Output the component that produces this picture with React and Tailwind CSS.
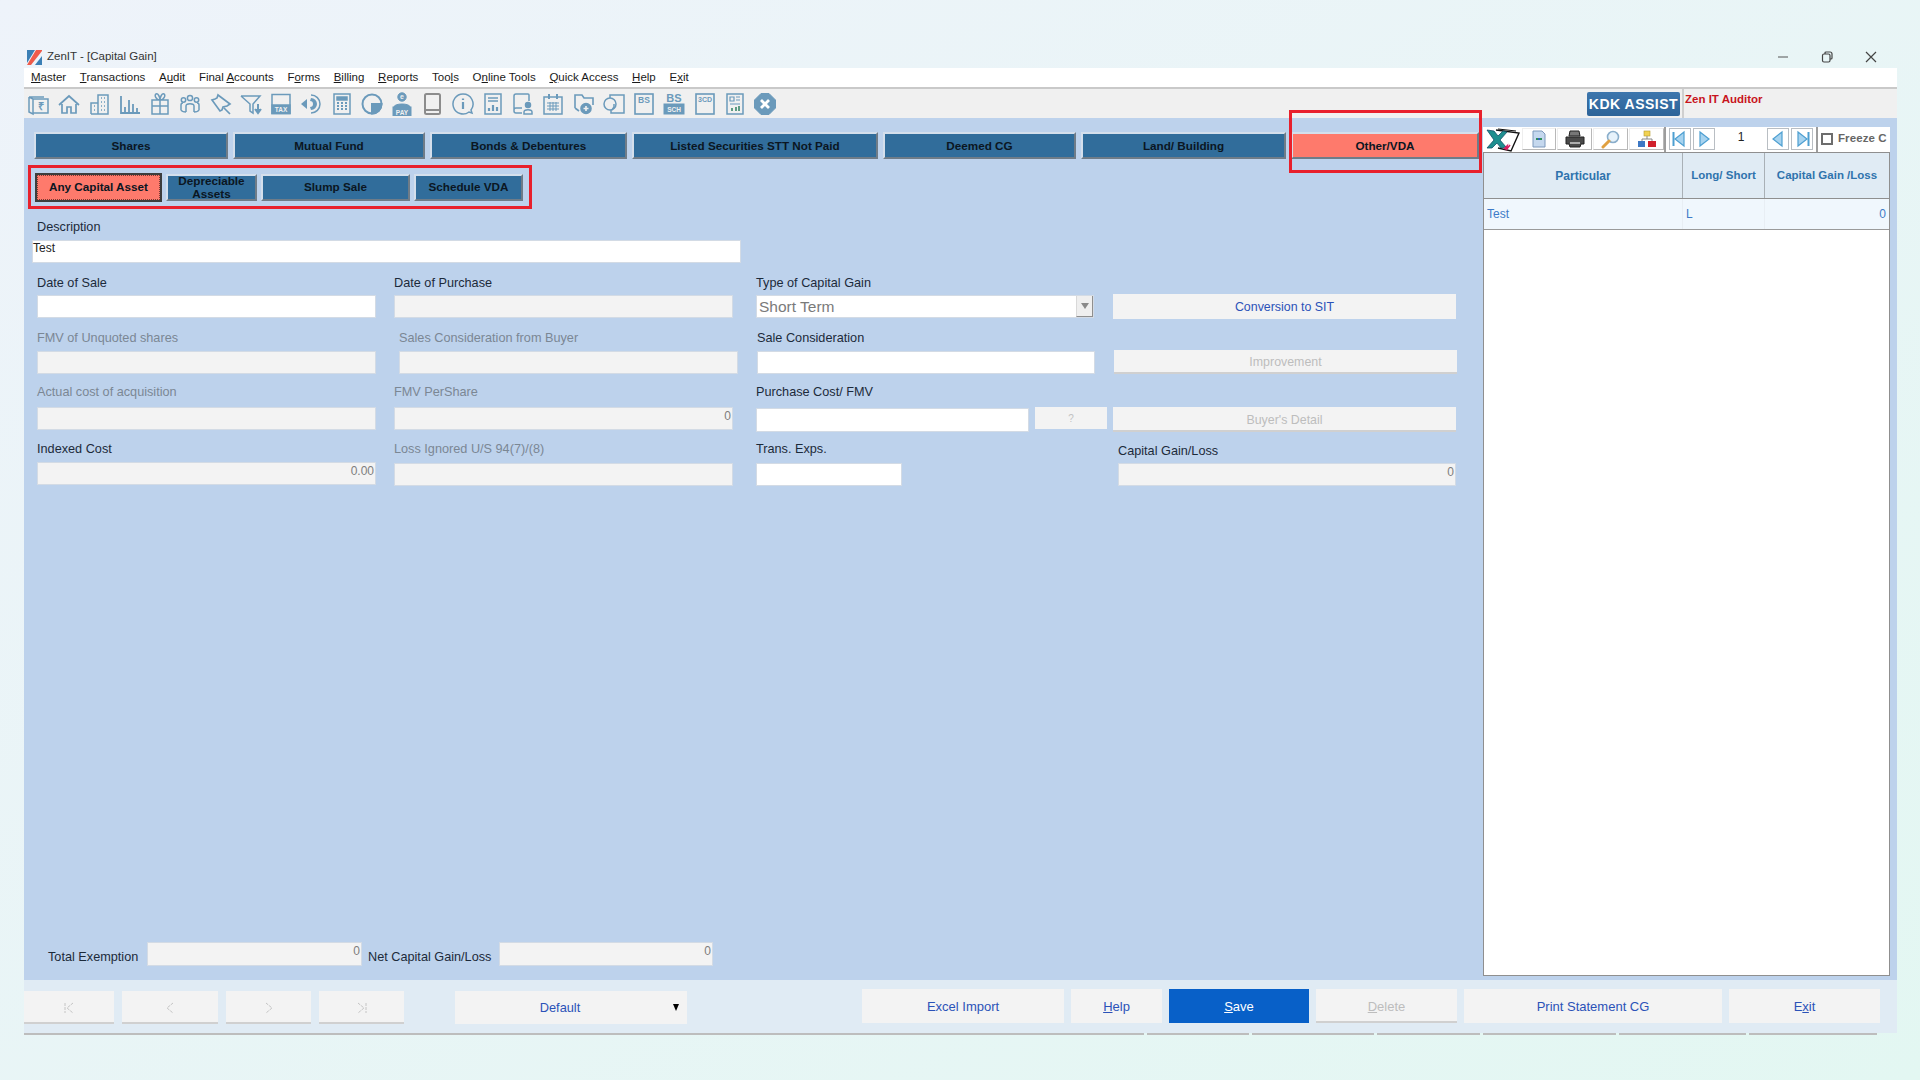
const sans = "font-['Liberation_Sans',Arial,sans-serif]";

function U({ children }) {
  return <span className="underline">{children}</span>;
}

function Ico({ children, fill = "none", sw = 1.5, color = "#6b9abb" }) {
  return (
    <svg width="24" height="24" viewBox="0 0 24 24" fill={fill} stroke={color} strokeWidth={sw}>
      {children}
    </svg>
  );
}

function IconText({ x = 12, y, size, children, color = "#6b9abb" }) {
  return (
    <text x={x} y={y} textAnchor="middle" fontSize={size} fontWeight="700" fontFamily="Liberation Sans" fill={color} stroke="none">
      {children}
    </text>
  );
}

const toolbarIcons = [
  <Ico>
    <path d="M2 5h15M2 5v15l4 2V7L2 5M6 7h15v14H6" />
    <IconText x={13.5} y={18} size={11}>₹</IconText>
  </Ico>,
  <Ico sw={1.7}>
    <path d="M2 13 12 4l10 9M5 12v9h5v-6h4v6h5v-9" />
  </Ico>,
  <Ico>
    <path d="M10 22V3h10v19H10M3 22V11h7M3 22h17M13 6h1M16 6h1M13 10h1M16 10h1M13 14h1M16 14h1M13 18h1M16 18h1M6 14h1M6 18h1" />
  </Ico>,
  <Ico sw={1.8}>
    <path d="M3 4v17h19M7 21v-6M11 21V8M15 21v-9M19 21v-5" />
  </Ico>,
  <Ico>
    <path d="M4 8h16v14H4zM4 14h16M12 8v14M12 8C8 8 6 3 8 2s4 3 4 6c0-3 2-7 4-6s0 6-4 6" />
  </Ico>,
  <Ico>
    <circle cx="12" cy="6" r="2.6" />
    <circle cx="5.5" cy="8" r="2.2" />
    <circle cx="18.5" cy="8" r="2.2" />
    <path d="M8 20v-6c0-3 8-3 8 0v6M3 18v-5c0-1 1-2 2-2M21 18v-5c0-1-1-2-2-2M3 18c1 2 4 2 5 2M21 18c-1 2-4 2-5 2" />
  </Ico>,
  <Ico sw={1.7}>
    <path d="m9 3 12 9-3 2-4 1-1 3-2 1-8-11 3-1 2-1zM15 16l6 6" />
  </Ico>,
  <Ico sw={1.5}>
    <path d="M2 4h19l-7 8v9l-3-2v-7L2 4" />
    <path d="M19 12v7M16 17l3 4 3-4" fill="#6b9abb" strokeWidth="2" />
  </Ico>,
  <Ico>
    <rect x="3" y="2.5" width="18" height="19" />
    <rect x="3" y="13" width="18" height="8.5" fill="#6b9abb" />
    <IconText y={20} size={6.5} color="#f0f0f0">TAX</IconText>
  </Ico>,
  <Ico sw={1.5}>
    <path d="M12 3a9 9 0 1 1 0 18" />
    <path d="M12 6a6 6 0 0 1 0 12l-1-3a3 3 0 0 0 0-6z" fill="#6b9abb" stroke="none" />
    <path d="M2 12l6-5v10z" fill="#6b9abb" stroke="none" />
  </Ico>,
  <Ico sw={1.5}>
    <rect x="4" y="2" width="16" height="20" />
    <rect x="7" y="5" width="10" height="3" fill="#6b9abb" />
    <path d="M7 11h2M11 11h2M15 11h2M7 14h2M11 14h2M15 14h2M7 17h2M11 17h2M15 17h2" strokeWidth="2" />
  </Ico>,
  <Ico sw={2}>
    <circle cx="12" cy="12" r="9.5" />
    <path d="M12 12h9.5A9.5 9.5 0 0 1 12 21.5z" fill="#6b9abb" />
  </Ico>,
  <Ico sw={1}>
    <circle cx="12" cy="5" r="4.2" fill="#6b9abb" />
    <path d="M4 15c0-4 16-4 16 0z" fill="#6b9abb" />
    <rect x="3" y="15" width="18" height="9" fill="#6b9abb" />
    <IconText y={7} size={7} color="#f0f0f0">e</IconText>
    <IconText y={22.5} size={6.5} color="#f0f0f0">PAY</IconText>
  </Ico>,
  <Ico color="#8c8c8c" sw={2}>
    <rect x="5" y="2" width="15" height="20" rx="1.5" />
    <path d="M5 18h15" />
  </Ico>,
  <Ico sw={1.5}>
    <path d="M12 2a10 10 0 1 0 6 18l3 1-1-3a10 10 0 0 0-8-16z" />
    <path d="M12 10v7M12 6.5v1.5" strokeWidth="2.2" />
  </Ico>,
  <Ico sw={1.5}>
    <rect x="4" y="2" width="16" height="20" />
    <path d="M7 6h10M7 9h10" />
    <path d="M8 19v-3M12 19v-6M16 19v-4" strokeWidth="2.2" />
  </Ico>,
  <Ico sw={1.5}>
    <path d="M11 21H5a2 2 0 0 1-2-2V4a2 2 0 0 1 2-2h12a1 1 0 0 1 1 1v6M3 18a2 2 0 0 1 2-2h6" />
    <circle cx="17" cy="13" r="2.5" fill="#6b9abb" />
    <path d="M13 22v-2c0-3 8-3 8 0v2z" />
  </Ico>,
  <Ico sw={1.5}>
    <rect x="3" y="5" width="18" height="17" />
    <path d="M8 2v5M16 2v5" strokeWidth="2" />
    <path d="M6 11h12M6 14h12M6 17h12M9 10v9M12 10v9M15 10v9" strokeWidth="1" />
  </Ico>,
  <Ico sw={1.6}>
    <path d="M3 16V3h7l2 3h9v7M3 16l4 3" />
    <circle cx="14" cy="16.5" r="5" fill="#6b9abb" />
    <path d="M14 14v5M11.5 16.5h5" stroke="#f0f0f0" />
  </Ico>,
  <Ico sw={1.5}>
    <path d="M8 6V3h14v18H9v-3" />
    <circle cx="8" cy="12" r="6" />
    <path d="M12 12v3l-2 3" />
  </Ico>,
  <Ico sw={1.6}>
    <rect x="3" y="2" width="18" height="20" />
    <IconText y={11} size={8.5}>BS</IconText>
  </Ico>,
  <Ico sw={1}>
    <IconText y={10} size={11}>BS</IconText>
    <rect x="2" y="12" width="20" height="10" fill="#6b9abb" />
    <IconText y={20} size={6.5} color="#f0f0f0">SCH</IconText>
  </Ico>,
  <Ico sw={1.6}>
    <rect x="3" y="2" width="18" height="20" />
    <IconText y={10} size={7}>3CD</IconText>
  </Ico>,
  <Ico sw={1.5}>
    <rect x="4" y="2" width="16" height="20" />
    <path d="M7 5h4v4H7zM13 5h4M13 8h4M7 12h10" strokeWidth="1.2" />
    <path d="M9 19v-3M13 19v-4M16 19v-5" strokeWidth="2" stroke="#5d9c83" />
  </Ico>,
  <Ico sw={1}>
    <path d="M8 1.5h8L22.5 8v8L16 22.5H8L1.5 16V8z" fill="#6b9abb" stroke="#6b9abb" />
    <path d="m8 8 8 8M16 8l-8 8" stroke="#fff" strokeWidth="2.8" />
  </Ico>,
];

function Tab({ w, active, children }) {
  return (
    <div
      className={
        w +
        " h-[27px] flex items-center justify-center text-[11.7px] font-bold text-[#0b1622] border-t-2 border-l-2 border-t-[#d4dfec] border-l-[#d4dfec] border-b-2 border-r-2 border-b-[#6f7c88] border-r-[#6f7c88] " +
        (active ? "bg-[#fe7a6c]" : "bg-[#316d9b]")
      }
    >
      {children}
    </div>
  );
}

function Field({ label, dim, value, off, className = "", boxTop = "mt-[4px]", labelClass = "" }) {
  return (
    <div className={className}>
      <div className={"h-[16px] leading-[16px] text-[12.7px] " + labelClass + " " + (dim ? "text-[#7b8794]" : "text-[#1c2a3a]")}>
        {label}
      </div>
      <div
        className={
          boxTop +
          " h-[23px] border border-[#d3dbe5] text-right pr-[1px] text-[12px] leading-[16px] text-[#7d7d7d] " +
          (off ? "bg-[#f3f3f3]" : "bg-white")
        }
      >
        {value}
      </div>
    </div>
  );
}

function FlatButton({ className = "", dim, size = "text-[12.4px]", children }) {
  return (
    <div
      className={
        className +
        " " +
        size +
        " bg-[#f3f3f3] flex items-center justify-center " +
        (dim ? "text-[#bdbdbd] border-b-2 border-[#d0d0d0] pt-[3px]" : "text-[#2b52b8] pt-[1px]")
      }
    >
      {children}
    </div>
  );
}

function NavGlyph({ d }) {
  return (
    <svg width="14" height="14" viewBox="0 0 14 14" fill="none" stroke="#c4c4c4" strokeWidth="1">
      <path d={d} strokeDasharray="3 1" />
    </svg>
  );
}

function BlueTri({ dir, bar }) {
  const tri = dir === "left" ? "M13 2 4 9l9 7z" : "M5 2l9 7-9 7z";
  const barX = dir === "left" ? "M2.5 2v14" : "M15.5 2v14";
  return (
    <div className="shrink-0 -mt-[1px] w-[22px] h-[22px] border border-[#b9bec3] flex items-center justify-center">
      <svg width="18" height="18" viewBox="0 0 18 18" fill="#a7d3ef" stroke="#4d9fd1" strokeWidth="1.2">
        <path d={tri} />
        {bar && <path d={barX} strokeWidth="2" />}
      </svg>
    </div>
  );
}

function PanelBtn({ className, children }) {
  return (
    <div className={className + " shrink-0 -mt-[1px] h-[22px] flex items-center justify-center border-r border-b border-[#b8b8b8] border-t border-l border-t-[#eeeeee] border-l-[#eeeeee]"}>
      {children}
    </div>
  );
}

export default function App() {
  return (
    <div className={sans + " w-[1920px] h-[1080px] overflow-hidden bg-linear-to-br from-[#eef3fa] to-[#e3f7f2] pt-[46px] pl-[24px]"}>
      <div className="w-[1873px]">
        {/* title bar */}
        <div className="h-[22px] flex items-center relative">
          <svg width="15" height="15" viewBox="0 0 15 15" className="ml-[3px]">
            <path d="M0 0h8L0 13z" fill="#3b7fb5" />
            <path d="M9 0h6v1L4 15H0z" fill="#ee5b4b" />
            <path d="M8 15l7-9v9z" fill="#3b7fb5" />
          </svg>
          <span className="ml-[5px] text-[#333] text-[11.5px]">ZenIT - [Capital Gain]</span>
          <div className="ml-auto flex items-center text-[#444] pr-[20px]">
            <svg width="12" height="12" viewBox="0 0 12 12" stroke="#555" fill="none" className="mr-[32px]">
              <path d="M1 6h10" />
            </svg>
            <svg width="12" height="12" viewBox="0 0 12 12" stroke="#444" fill="none" className="mr-[32px]" strokeWidth="1.2">
              <rect x="1.5" y="3" width="7.5" height="8" rx="1.5" />
              <path d="M4 3V2a1 1 0 0 1 1-1h4a2 2 0 0 1 2 2v4a1 1 0 0 1-1 1H9" />
            </svg>
            <svg width="12" height="12" viewBox="0 0 12 12" stroke="#444" fill="none" strokeWidth="1.2">
              <path d="m1 1 10 10M11 1 1 11" />
            </svg>
          </div>
        </div>

        {/* menu */}
        <div className="h-[21px] bg-white border-b-2 border-[#c9c9c9] flex items-center text-[11.5px] text-[#1a1a1a] pl-[7px] gap-[13.7px]">
          <span><U>M</U>aster</span>
          <span><U>T</U>ransactions</span>
          <span>A<U>u</U>dit</span>
          <span>Final <U>A</U>ccounts</span>
          <span>F<U>o</U>rms</span>
          <span><U>B</U>illing</span>
          <span><U>R</U>eports</span>
          <span>Too<U>l</U>s</span>
          <span>O<U>n</U>line Tools</span>
          <span><U>Q</U>uick Access</span>
          <span><U>H</U>elp</span>
          <span>E<U>x</U>it</span>
        </div>

        {/* toolbar */}
        <div className="h-[29px] bg-[#f0f0f0] flex items-center">
          {toolbarIcons.map((icon, i) => (
            <div key={i} className="w-[30.25px] flex items-center justify-center">
              {icon}
            </div>
          ))}
          <div className="ml-auto flex items-start h-full">
            <div className="w-[93px] h-[24px] mt-[3px] rounded-[2px] bg-linear-to-b from-[#3d76ad] to-[#2c6398] text-white text-[14px] font-bold tracking-[0.5px] whitespace-nowrap flex items-center justify-center">
              KDK ASSIST
            </div>
            <div className="w-[215px] h-full border-l-2 border-[#cfcfcf] ml-[2px] pl-[1px] text-[11.5px] font-bold text-[#c8141c] pt-[2px]">
              Zen IT Auditor
            </div>
          </div>
        </div>

        {/* main */}
        <div className="h-[862px] bg-[#bdd2ec] flex">
          <div className="w-[1459px] flex flex-col">
            {/* main tabs */}
            <div className="flex gap-[5px] mt-[14px] pl-[10px]">
              <Tab w="w-[194px]">Shares</Tab>
              <Tab w="w-[192px]">Mutual Fund</Tab>
              <Tab w="w-[197px]">Bonds &amp; Debentures</Tab>
              <Tab w="w-[246px]">Listed Securities STT Not Paid</Tab>
              <Tab w="w-[193px]">Deemed CG</Tab>
              <Tab w="w-[205px]">Land/ Building</Tab>
              <div className="relative">
                <Tab w="w-[188px]" active>Other/VDA</Tab>
                <div className="absolute -left-[2px] -right-[3px] -top-[22px] -bottom-[14px] border-[3px] border-[#e8202c]" />
              </div>
            </div>

            {/* sub tabs */}
            <div className="ml-[4px] mt-[6px] w-[504px] h-[44px] border-[3px] border-[#e8202c] flex items-center gap-[4px] pl-[4px]">
              <div className="w-[127px] h-[29px] bg-[#fe7a6c] border-2 border-[#3d3d3d] flex items-center justify-center text-[11.7px] font-bold text-[#0b1622] outline-1 outline-dotted -outline-offset-3 outline-[#7a3a33]">
                Any Capital Asset
              </div>
              <Tab w="w-[91px]">
                <span className="text-center leading-[13px]">Depreciable Assets</span>
              </Tab>
              <Tab w="w-[149px]">Slump Sale</Tab>
              <Tab w="w-[109px]">Schedule VDA</Tab>
            </div>

            {/* description */}
            <Field
              label="Description"
              className="mt-[10px] ml-[8px] w-[709px]"
              labelClass="pl-[5px]"
              boxTop="mt-[5px] !text-left !pl-0 !text-[#222] !leading-[15px]"
              value="Test"
            />

            {/* row 1 */}
            <div className="flex mt-[12px] pl-[13px]">
              <Field label="Date of Sale" className="w-[339px]" />
              <Field label="Date of Purchase" className="w-[339px] ml-[18px]" off />
              <div className="w-[338px] ml-[23px]">
                <div className="h-[16px] leading-[16px] text-[12.7px] text-[#1c2a3a]">Type of Capital Gain</div>
                <div className="mt-[4px] h-[23px] bg-white border border-[#d3dbe5] flex items-center pl-[2px] text-[15.5px] text-[#7a7a7a]">
                  Short Term
                  <div className="ml-auto w-[17px] h-full bg-[#efefef] border-r border-b border-[#8f8f8f] border-l border-l-[#d9d9d9] flex items-center justify-center">
                    <svg width="8" height="6" viewBox="0 0 8 6"><path d="M0 0h8L4 6z" fill="#8a8a8a" /></svg>
                  </div>
                </div>
              </div>
              <FlatButton className="w-[343px] h-[25px] ml-[19px] mt-[19px]">Conversion to SIT</FlatButton>
            </div>

            {/* row 2 */}
            <div className="flex mt-[11px] pl-[13px]">
              <Field label="FMV of Unquoted shares" dim off boxTop="mt-[5px]" className="w-[339px]" />
              <Field label="Sales Consideration from Buyer" dim off boxTop="mt-[5px]" className="w-[339px] ml-[23px]" />
              <Field label="Sale Consideration" boxTop="mt-[5px]" className="w-[338px] ml-[19px]" />
              <FlatButton dim className="w-[343px] h-[24px] ml-[19px] mt-[20px]">Improvement</FlatButton>
            </div>

            {/* row 3 */}
            <div className="flex mt-[10px] pl-[13px]">
              <Field label="Actual cost of acquisition" dim off boxTop="mt-[7px]" className="w-[339px]" />
              <Field label="FMV PerShare" dim off boxTop="mt-[7px]" value="0" className="w-[339px] ml-[18px]" />
              <div className="w-[351px] ml-[23px]">
                <div className="h-[16px] leading-[16px] text-[12.7px] text-[#1c2a3a]">Purchase Cost/ FMV</div>
                <div className="flex items-start mt-[7px]">
                  <div className="w-[273px] h-[24px] mt-[1px] bg-white border border-[#d3dbe5]" />
                  <div className="w-[72px] h-[22px] ml-[6px] bg-[#f3f3f3] flex items-center justify-center text-[10px] text-[#c2c2c2]">?</div>
                </div>
              </div>
              <FlatButton dim className="w-[343px] h-[25px] ml-[6px] mt-[23px]">Buyer's Detail</FlatButton>
            </div>

            {/* row 4 */}
            <div className="flex mt-[9px] pl-[13px]">
              <Field label="Indexed Cost" off boxTop="mt-[5px]" value="0.00" className="w-[339px]" />
              <Field label="Loss Ignored U/S 94(7)/(8)" dim off boxTop="mt-[6px]" className="w-[339px] ml-[18px]" />
              <Field label="Trans. Exps." boxTop="mt-[6px]" className="w-[146px] ml-[23px]" />
              <Field
                label="Capital Gain/Loss"
                off
                value="0"
                boxTop="mt-[4px]"
                labelClass="mt-[2px]"
                className="w-[338px] ml-[216px]"
              />
            </div>

            {/* totals */}
            <div className="mt-auto mb-[14px] flex items-start pl-[24px]">
              <span className="mt-[7px] h-[16px] leading-[16px] text-[12.7px] text-[#1c2a3a] w-[99px]">Total Exemption</span>
              <div className="w-[215px] h-[24px] bg-[#f3f3f3] border border-[#d3dbe5] text-right text-[12px] leading-[16px] pr-[1px] text-[#7d7d7d]">0</div>
              <span className="mt-[7px] h-[16px] leading-[16px] text-[12.7px] text-[#1c2a3a] ml-[6px] w-[131px] whitespace-nowrap">Net Capital Gain/Loss</span>
              <div className="w-[214px] h-[24px] bg-[#f3f3f3] border border-[#d3dbe5] text-right text-[12px] leading-[16px] pr-[1px] text-[#7d7d7d]">0</div>
            </div>
          </div>

          {/* right panel */}
          <div className="w-[407px] h-[849px] mt-[9px] flex flex-col">
            <div className="h-[25px] bg-white flex items-center overflow-hidden">
              <div className="w-[38px] shrink-0 h-[24px] flex items-center justify-center">
                <svg width="36" height="24" viewBox="0 0 36 24">
                  <path d="M12 2 35 5l-8 18-13-3" fill="#fff" stroke="#111" strokeWidth="1.4" />
                  <path d="M14 1 32 3" stroke="#111" />
                  <path d="m3 2 7 1 4 5 5-5 4 1-7 8 6 7-5 1-4-5-5 5H3l7-8z" fill="#1f8f8f" stroke="#14506a" strokeWidth="0.8" />
                  <path d="m20 21 3-3-1 4 4-5" stroke="#d81b60" strokeWidth="1.6" fill="none" />
                </svg>
              </div>
              <PanelBtn className="w-[34px] ml-[1px]">
                <svg width="16" height="18" viewBox="0 0 16 18">
                  <path d="M2 1h9l3 3v13H2z" fill="#c5d8ee" stroke="#7d99bc" />
                  <path d="M5 9h2M9 9h2" stroke="#2f8f5b" strokeWidth="2" />
                  <path d="M7 9h2" stroke="#2f68b8" strokeWidth="2" />
                </svg>
              </PanelBtn>
              <PanelBtn className="w-[35px] ml-[1px]">
                <svg width="20" height="18" viewBox="0 0 20 18">
                  <path d="M5 1h9l1 5H4z" fill="#777" stroke="#222" />
                  <path d="M1 7h18v7h-3l-1 3H5l-1-3H1z" fill="#4a4a4a" stroke="#222" />
                  <path d="M5 13h10" stroke="#d8d8d8" strokeWidth="1.4" />
                </svg>
              </PanelBtn>
              <PanelBtn className="w-[35px] ml-[1px]">
                <svg width="20" height="20" viewBox="0 0 20 20">
                  <circle cx="12" cy="8" r="5.5" fill="#e6f2fb" stroke="#8aaecb" strokeWidth="1.6" />
                  <path d="m8 12-6 6" stroke="#e0a040" strokeWidth="3" strokeLinecap="round" />
                </svg>
              </PanelBtn>
              <PanelBtn className="w-[35px] ml-[1px]">
                <svg width="20" height="18" viewBox="0 0 20 18">
                  <rect x="7" y="1" width="6" height="5" fill="#f1d253" stroke="#b59a2e" strokeWidth="0.6" />
                  <path d="M10 6v3M5 11V9h10v2" stroke="#888" fill="none" />
                  <rect x="1" y="11" width="7" height="6" fill="#3d78c4" />
                  <rect x="11" y="11" width="8" height="6" fill="#d0202c" />
                </svg>
              </PanelBtn>
              <div className="shrink-0 h-full border-l-2 border-[#9d9d9d] pl-[3px] flex items-center gap-[2px]">
                <BlueTri dir="left" bar />
                <BlueTri dir="right" />
              </div>
              <span className="shrink-0 w-[52px] text-center text-[12px] -mt-[6px] text-[#222]">1</span>
              <div className="shrink-0 flex items-center gap-[2px]">
                <BlueTri dir="left" />
                <BlueTri dir="right" bar />
              </div>
              <div className="shrink-0 ml-[3px] h-full border-l-2 border-[#9d9d9d] pl-[3px] flex items-center">
                <div className="-mt-[1px] w-[12px] h-[12px] border-2 border-[#6d6d6d]" />
                <span className="-mt-[1px] ml-[5px] text-[11.5px] font-bold tracking-[0.1px] text-[#666] whitespace-nowrap">Freeze C</span>
              </div>
            </div>

            <div className="flex-1 border border-[#8f8f8f] bg-white flex flex-col">
              <div className="flex h-[46px] bg-[#e0ebf4] border-b border-[#8f8f8f] text-[11.5px] font-bold text-[#2f73ad]">
                <div className="w-[199px] border-r border-[#a9b0b6] flex items-center justify-center text-[12px]">Particular</div>
                <div className="w-[82px] border-r border-[#a9b0b6] flex items-center justify-center">Long/ Short</div>
                <div className="flex-1 flex items-center justify-center">Capital Gain /Loss</div>
              </div>
              <div className="flex h-[31px] bg-[#f0f7fd] border-b border-[#9a9a9a] text-[12px] text-[#3d7bc8]">
                <div className="w-[199px] border-r border-[#e8eef4] flex items-center pl-[3px]">Test</div>
                <div className="w-[82px] border-r border-[#e8eef4] flex items-center pl-[3px]">L</div>
                <div className="flex-1 flex items-center justify-end pr-[3px]">0</div>
              </div>
            </div>
          </div>
        </div>

        {/* footer */}
        <div className="h-[53px] bg-[#e0ebf4] flex items-start pt-[9px]">
          <div className="flex items-center gap-[8px] mt-[2px]">
            <FlatButton dim className="w-[90px] h-[33px]">
              <NavGlyph d="M3 2v10M11 2 5 7l6 5" />
            </FlatButton>
            <FlatButton dim className="w-[96px] h-[33px]">
              <NavGlyph d="M10 2 4 7l6 5" />
            </FlatButton>
            <FlatButton dim className="w-[85px] h-[33px]">
              <NavGlyph d="m4 2 6 5-6 5" />
            </FlatButton>
            <FlatButton dim className="w-[85px] h-[33px]">
              <NavGlyph d="M11 2v10M3 2l6 5-6 5" />
            </FlatButton>
            <div className="relative ml-[43px] w-[232px] h-[33px] bg-[#f3f3f3] flex items-center justify-center pr-[22px] text-[12.8px] text-[#2b52b8]">
              Default
              <span className="absolute right-[8px] top-[13px] w-0 h-0 border-l-[3.5px] border-r-[3.5px] border-t-[7px] border-l-transparent border-r-transparent border-t-black" />
            </div>
          </div>
          <div className="ml-auto pr-[17px] flex items-center gap-[7px]">
            <FlatButton size="text-[13px]" className="w-[202px] h-[34px]">Excel Import</FlatButton>
            <FlatButton size="text-[13px]" className="w-[91px] h-[34px]"><span><U>H</U>elp</span></FlatButton>
            <div className="w-[140px] h-[34px] pt-[1px] bg-[#0860c8] flex items-center justify-center text-[13px] text-white">
              <span><U>S</U>ave</span>
            </div>
            <FlatButton size="text-[13px]" dim className="w-[141px] h-[34px]"><span><U>D</U>elete</span></FlatButton>
            <FlatButton size="text-[13px]" className="w-[258px] h-[34px]">Print Statement CG</FlatButton>
            <FlatButton size="text-[13px]" className="w-[151px] h-[34px]"><span>E<U>x</U>it</span></FlatButton>
          </div>
        </div>

        {/* status line */}
        <div className="flex h-[2px] gap-[3px] w-[1853px]">
          <div className="w-[1120px] bg-[#bdbdbd]" />
          <div className="w-[102px] bg-[#bdbdbd]" />
          <div className="w-[122px] bg-[#bdbdbd]" />
          <div className="w-[103px] bg-[#bdbdbd]" />
          <div className="w-[133px] bg-[#bdbdbd]" />
          <div className="w-[127px] bg-[#bdbdbd]" />
          <div className="w-[128px] bg-[#bdbdbd]" />
        </div>
      </div>
    </div>
  );
}
